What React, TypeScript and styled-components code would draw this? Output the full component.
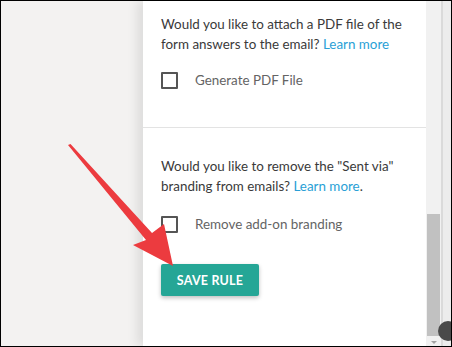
import * as React from 'react';
import styled, {createGlobalStyle} from 'styled-components';

const Global = createGlobalStyle`
  html, body {
    margin: 0;
    padding: 0;
    background: #fff;
  }
  body {
    font-family: 'Segoe UI', Lato, 'Noto Sans', sans-serif;
  }
`;

const Frame = styled.div`
  position: relative;
  width: 452px;
  height: 347px;
  box-sizing: border-box;
  border: 1px solid #000;
  display: flex;
  overflow: hidden;
  background: #f3f2f1;
`;

const Backdrop = styled.div`
  width: 142px;
  flex: none;
  background: #f3f2f1;
`;

const Panel = styled.div`
  position: relative;
  width: 283px;
  flex: none;
  background: #fff;
  box-shadow: -6px 0 10px rgba(0, 0, 0, 0.09);
  display: flex;
  flex-direction: column;
`;

const Section = styled.section<{top: number; bottom: number; divided?: boolean}>`
  padding: ${({top}) => top}px 8px ${({bottom}) => bottom}px 18px;
  border-bottom: ${({divided}) => (divided ? '1px solid #e3e3e3' : 'none')};
`;

const Question = styled.p`
  margin: 0;
  font-size: 13.4px;
  line-height: 20px;
  color: #3a3a3a;
`;

const Link = styled.a`
  color: #2a9fd6;
  text-decoration: none;
`;

const CheckRow = styled.label<{gap: number}>`
  display: flex;
  align-items: center;
  gap: 17px;
  margin-top: ${({gap}) => gap}px;
  height: 20px;
  font-size: 13.4px;
  color: #646464;
`;

const Box = styled.span`
  width: 17px;
  height: 17px;
  box-sizing: border-box;
  border: 2px solid #555;
  border-radius: 1px;
  flex: none;
`;

const SaveButton = styled.button`
  margin-top: 30px;
  height: 32px;
  width: 98px;
  border: none;
  border-radius: 2px;
  background: #25a696;
  color: #fff;
  font-family: inherit;
  font-weight: 700;
  font-size: 12.5px;
  letter-spacing: 0.2px;
  box-shadow: 0 2px 4px rgba(0, 0, 0, 0.25);
  padding: 0;
`;

const Track = styled.div`
  position: relative;
  width: 17px;
  flex: none;
  background: #f1f1f1;
  border-right: 2px solid #dadada;
  display: flex;
  flex-direction: column;
  align-items: center;
  padding-top: 213px;
  box-sizing: border-box;
`;

const Thumb = styled.div`
  width: 13px;
  height: 122px;
  background: #c1c1c1;
`;

const DownArrow = styled.div`
  margin-top: 5px;
  width: 0;
  height: 0;
  border-left: 3px solid transparent;
  border-right: 3px solid transparent;
  border-top: 3px solid #a3a3a3;
`;

const Edge = styled.div`
  flex: 1;
  background: #ececec;
`;

const Bubble = styled.div`
  position: absolute;
  left: 437px;
  top: 320px;
  width: 20px;
  height: 20px;
  border-radius: 50%;
  background: #4a4a4a;
`;

const Pointer = styled.svg`
  position: absolute;
  left: 0;
  top: 0;
  pointer-events: none;
`;

export default function App() {
  return (
    <>
      <Global />
      <Frame>
        <Backdrop />
        <Panel>
          <Section top={13} bottom={37} divided>
            <Question>
              Would you like to attach a PDF file of the form answers to the email?{' '}
              <Link>Learn more</Link>
            </Question>
            <CheckRow gap={16}>
              <Box />
              Generate PDF File
            </CheckRow>
          </Section>
          <Section top={28} bottom={0}>
            <Question>
              Would you like to remove the "Sent via" branding from emails?{' '}
              <Link>Learn more</Link>.
            </Question>
            <CheckRow gap={18}>
              <Box />
              Remove add-on branding
            </CheckRow>
            <SaveButton>SAVE RULE</SaveButton>
          </Section>
        </Panel>
        <Track>
          <Thumb />
          <DownArrow />
        </Track>
        <Edge />
        <Bubble />
        <Pointer width="452" height="347" viewBox="0 0 452 347">
          <polygon
            points="67,144 69.5,143 151,232 163,223 172,265 132,244 145,239"
            fill="#ec3b3f"
          />
        </Pointer>
      </Frame>
    </>
  );
}
